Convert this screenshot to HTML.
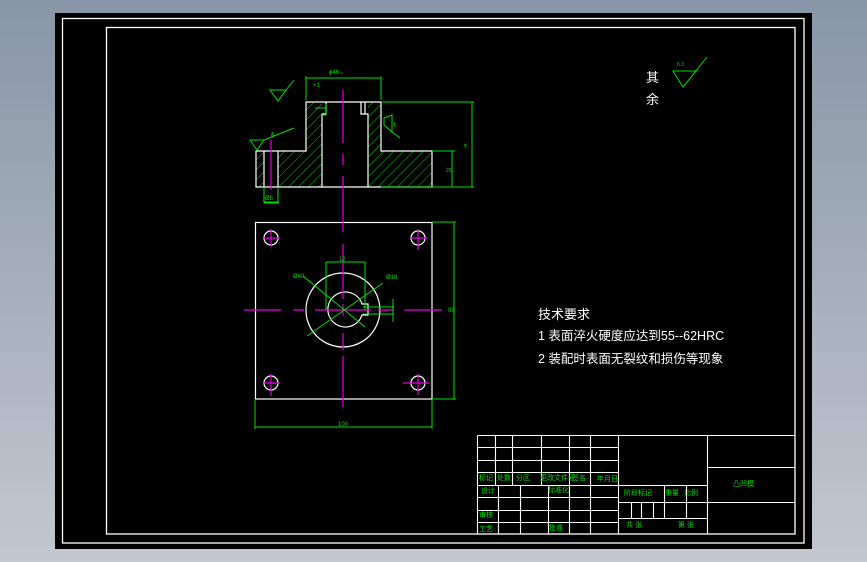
<!DOCTYPE html>
<html><head><meta charset="utf-8"><style>
html,body{margin:0;padding:0;width:867px;height:562px;overflow:hidden;background:linear-gradient(#8796a8,#c3c7cf);}
svg{position:absolute;left:0;top:0}
text{font-family:"Liberation Sans","Noto Sans CJK SC",sans-serif}
</style></head><body>
<svg width="867" height="562" viewBox="0 0 867 562" xmlns="http://www.w3.org/2000/svg">
<defs>
<pattern id="h" width="7" height="7" patternUnits="userSpaceOnUse" patternTransform="rotate(45)">
<line x1="0" y1="0" x2="0" y2="7" stroke="#00d000" stroke-width="1"/>
</pattern>
</defs>
<rect x="55" y="13" width="757" height="536" fill="#000"/>
<g fill="none" stroke="#fff" stroke-width="1.3">
<rect x="62.5" y="18.5" width="741.5" height="524.5"/>
<rect x="106.5" y="27.5" width="688.5" height="506.5"/>
</g>
<!-- hatch -->
<g fill="url(#h)">
<rect x="256" y="151" width="8" height="36"/>
<path d="M278 151H306V102H322V187H278Z"/>
<path d="M368 102H381V151H432V187H368Z"/>
</g>
<!-- side view outline -->
<g fill="none" stroke="#fff" stroke-width="1.2">
<path d="M256 151H306V102H381V151H432V187H256Z"/>
<path d="M264 151V187M278 151V187"/>
<path d="M322 187V114H326V102M368 187V114H365V102M361 102V114H365"/>
</g>
<g stroke="#e000e0" stroke-width="1.2">
<path d="M343 90V143M343 154V165M343 176V210"/>
<path d="M271 140V190"/>
</g>
<!-- side dims -->
<g stroke="#00e000" stroke-width="1" fill="none">
<path d="M306 78H381M306 76V100M381 76V100"/>
<path d="M381 102H474M432 151H455M381 187H474M472 102V187M452 151V187"/>
<path d="M264 187V203H278V187M264 202H279"/>
<path d="M270 90H286L278 101ZM286 90L294 80"/>
<path d="M250 140H264L257 150ZM264 140L294 128"/>
<path d="M326 104V115H321M315 108H326"/>
<path d="M384 118L392 115V132L384 125ZM392 132L400 138"/>
<path d="M673 71H696L683 87ZM696 71L707 57"/>
</g>
<g fill="#00e000" font-size="6">
<text x="329" y="74">ɸ46 ₀</text>
<text x="313" y="87">+1</text>
<text x="271" y="136">ɸ</text>
<text x="265" y="200">Ø5</text>
<text x="464" y="147" font-size="5">ɸ</text>
<text x="446" y="172" font-size="5">25</text>
<text x="393" y="126" font-size="5">ɸ</text>
<text x="677" y="66" font-size="5">6.3</text>
</g>
<!-- plan view -->
<g fill="none" stroke="#fff" stroke-width="1.2">
<rect x="255.5" y="222.5" width="176.5" height="176.5"/>
<circle cx="271" cy="238" r="7"/><circle cx="418" cy="238" r="7"/>
<circle cx="271" cy="383" r="7"/><circle cx="418" cy="383" r="7"/>
<path d="M343 273A37 37 0 1 1 342.9 273Z"/>
<path d="M362 315A17.5 17.5 0 1 1 362 304H368V315Z"/>
</g>
<g stroke="#e000e0" stroke-width="1.2">
<path d="M343 210V232M343 244V299M343 304V316M343 333V350M343 356V407"/>
<path d="M244 310H281M293 310H304M315 310H371M378 310H394M404 310H442"/>
<path d="M263 238H280M271 229V247M410 238H428M418 229V250M264 383H280M271 374V396M403 383H429M418 374V395"/>
</g>
<g stroke="#00e000" stroke-width="1" fill="none">
<path d="M432 222H456M432 399H456M454 222V399"/>
<path d="M255 399V429M432 399V429M255 427H432"/>
<path d="M326 262V310M365 262V310M326 262H365"/>
<path d="M303 276L365 327M383 283L307 336"/>
<path d="M363 307H394M363 314H394M393 299V322"/>
</g>
<g fill="#00e000" font-size="6">
<text x="339" y="261">12</text>
<text x="293" y="278">Ø40</text>
<text x="386" y="279">Ø18</text>
<text x="448" y="312">98</text>
<text x="338" y="426">100</text>
</g>
<!-- notes -->
<g fill="#fff" font-family="'Liberation Sans','Noto Sans CJK SC',sans-serif">
<text x="646" y="82" font-size="13">其</text>
<text x="646" y="104" font-size="13">余</text>
<text x="538" y="319" font-size="13">技术要求</text>
<text x="538" y="340" font-size="12.5">1 表面淬火硬度应达到55--62HRC</text>
<text x="538" y="363" font-size="12.5">2 装配时表面无裂纹和损伤等现象</text>
</g>
<!-- title block -->
<g fill="none" stroke="#fff" stroke-width="1.1">
<path d="M477.5 435.5H795M477.5 435.5V534"/>
<path d="M618.5 435.5V534M707.5 435.5V534"/>
<path d="M477 447.5H618M477 460.5H618M477 472.5H618M477 485.5H618M477 497.5H618M477 510.5H618M477 522.5H618"/>
<path d="M495.5 435V485M512.5 435V485M541.5 435V485M569.5 435V534M590.5 435V534"/>
<path d="M498.5 485V534M520.5 485V534M548.5 485V534"/>
<path d="M618 485.5H707M618 502.5H707M618 518.5H707"/>
<path d="M664.5 485V518M686.5 485V518M631.5 502V518M641.5 502V518M653.5 502V518"/>
<path d="M707 467.5H795M707 502.5H795"/>
</g>
<g fill="#00e000" font-size="7">
<text x="479" y="480">标记</text><text x="497" y="480">处数</text><text x="516" y="480">分区</text>
<text x="540" y="480">更改文件号</text><text x="572" y="480">签名</text><text x="597" y="481">年月日</text>
<text x="481" y="493">设计</text><text x="548" y="492">标准化</text>
<text x="479" y="517">审核</text><text x="479" y="531">工艺</text><text x="549" y="530">批准</text>
<text x="624" y="495">阶段标记</text><text x="665" y="495">重量</text><text x="684" y="495">比例</text>
<text x="626" y="527">共 张</text><text x="678" y="527">第 张</text>
<text x="733" y="486">凸凹模</text>
</g>
</svg>
</body></html>
